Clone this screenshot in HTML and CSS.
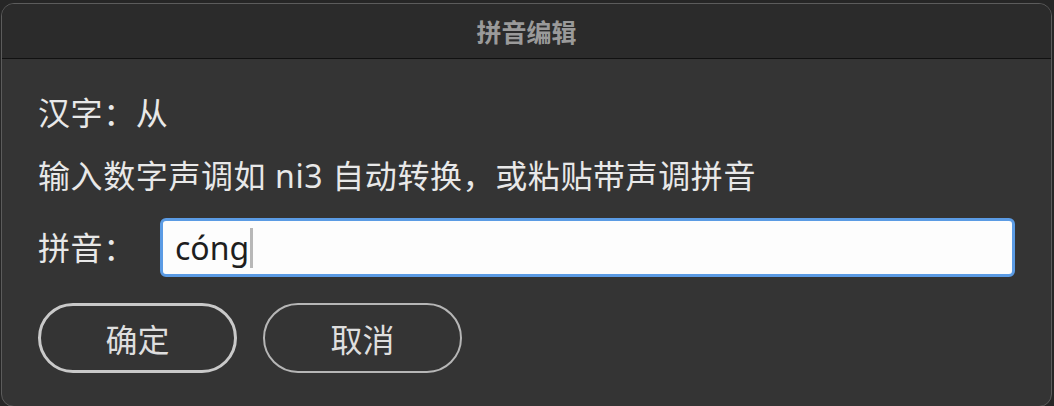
FILE: index.html
```html
<!DOCTYPE html>
<html lang="zh-CN">
<head>
<meta charset="utf-8">
<title>拼音编辑</title>
<link rel="stylesheet" href="styles.css">
</head>
<body>
<div class="window">
  <div class="titlebar">拼音编辑</div>
  <div class="content">
    <div class="line">汉字：从</div>
    <div class="line hint">输入数字声调如 ni3 自动转换，或粘贴带声调拼音</div>
    <div class="field-row">
      <span class="label">拼音：</span>
      <div class="textbox" role="textbox">cóng<span class="caret"></span></div>
    </div>
    <div class="actions">
      <button class="btn btn-default">确定</button>
      <button class="btn">取消</button>
    </div>
  </div>
</div>
</body>
</html>
```
FILE: styles.css
```css
html, body {
  margin: 0;
  padding: 0;
  height: 100%;
}
body {
  background: #262626;
  font-family: "Noto Sans", "Noto Sans CJK SC", sans-serif;
  overflow: hidden;
  padding: 3px 2px 0 1px;
  box-sizing: border-box;
}
.window {
  height: 402px;
  border: 1px solid #5c5c5c;
  border-radius: 13px;
  background: #343434;
  overflow: hidden;
  display: flex;
  flex-direction: column;
}
.titlebar {
  height: 54px;
  flex: none;
  background: #2b2b2b;
  border-bottom: 1px solid #111111;
  color: #9a9a9a;
  font-family: "Noto Sans CJK SC", sans-serif;
  font-weight: 700;
  font-size: 25px;
  display: flex;
  align-items: center;
  justify-content: center;
}
.content {
  padding: 34px 36px 0 36px;
  display: flex;
  flex-direction: column;
  color: #e8e8e8;
  font-size: 32px;
  letter-spacing: 0.6px;
}
.line {
  height: 40px;
  line-height: 40px;
  white-space: nowrap;
}
.hint {
  margin-top: 23px;
}
.field-row {
  margin-top: 22px;
  display: flex;
  align-items: center;
  gap: 24px;
}
.label {
  width: 98px;
  flex: none;
  white-space: nowrap;
  line-height: 40px;
}
.textbox {
  flex: 1;
  min-width: 0;
  height: 53px;
  border: 3px solid #5b9be4;
  border-radius: 6px;
  background: #fdfdfd;
  color: #1e1e1e;
  font-size: 32px;
  letter-spacing: 0;
  padding-left: 12px;
  display: flex;
  align-items: center;
}
.caret {
  display: inline-block;
  width: 3px;
  height: 40px;
  background: #b8b8b8;
  margin-left: 1px;
}
.actions {
  margin-top: 26px;
  display: flex;
  gap: 26px;
}
.btn {
  width: 199px;
  height: 70px;
  border-radius: 35px;
  background: transparent;
  border: 2px solid #b6b6b6;
  color: #dedede;
  font-family: "Noto Sans CJK SC", sans-serif;
  font-size: 32px;
  padding: 0;
  display: flex;
  align-items: center;
  justify-content: center;
}
.btn-default {
  border: 3px solid #c9c9c9;
}
```
